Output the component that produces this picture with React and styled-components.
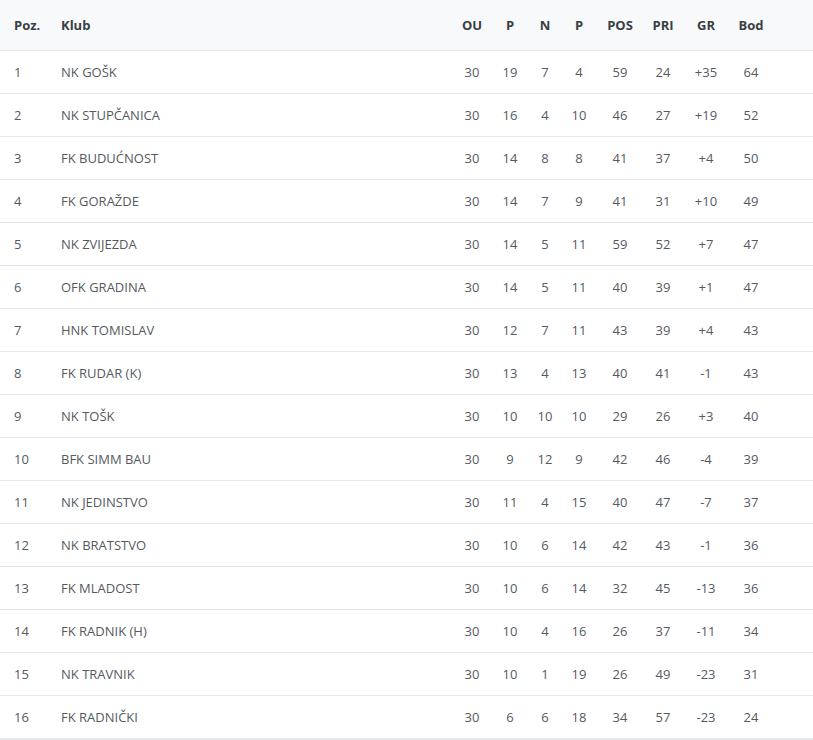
import React from "react";
import styled, { createGlobalStyle } from "styled-components";

const Global = createGlobalStyle`
  html, body { margin: 0; padding: 0; background: #fff; }
  body { font-family: "Open Sans", "Liberation Sans", sans-serif; }
`;

const cols = "47px 405px 40px 36px 34px 34px 48px 38px 48px 42px 1fr";

const Table = styled.div`
  width: 813px;
  border-bottom: 2px solid #e6e8ea;
`;

const Row = styled.div`
  display: grid;
  grid-template-columns: ${cols};
  height: ${(p) => (p.$head ? "50px" : "42px")};
  align-items: center;
  background: ${(p) => (p.$head ? "#f8f9fa" : "#fff")};
  border-bottom: ${(p) => (p.$last ? "none" : "1px solid #e6e8ea")};
  color: ${(p) => (p.$head ? "#3a3f44" : "#555a5f")};
  font-weight: ${(p) => (p.$head ? 700 : 400)};
  font-size: 13px;
`;

const Cell = styled.div`
  text-align: ${(p) => (p.$left ? "left" : "center")};
  padding-left: ${(p) => (p.$left ? "14px" : "0")};
  white-space: nowrap;
`;

const data = [
  [1, "NK GOŠK", 30, 19, 7, 4, 59, 24, "+35", 64],
  [2, "NK STUPČANICA", 30, 16, 4, 10, 46, 27, "+19", 52],
  [3, "FK BUDUĆNOST", 30, 14, 8, 8, 41, 37, "+4", 50],
  [4, "FK GORAŽDE", 30, 14, 7, 9, 41, 31, "+10", 49],
  [5, "NK ZVIJEZDA", 30, 14, 5, 11, 59, 52, "+7", 47],
  [6, "OFK GRADINA", 30, 14, 5, 11, 40, 39, "+1", 47],
  [7, "HNK TOMISLAV", 30, 12, 7, 11, 43, 39, "+4", 43],
  [8, "FK RUDAR (K)", 30, 13, 4, 13, 40, 41, "-1", 43],
  [9, "NK TOŠK", 30, 10, 10, 10, 29, 26, "+3", 40],
  [10, "BFK SIMM BAU", 30, 9, 12, 9, 42, 46, "-4", 39],
  [11, "NK JEDINSTVO", 30, 11, 4, 15, 40, 47, "-7", 37],
  [12, "NK BRATSTVO", 30, 10, 6, 14, 42, 43, "-1", 36],
  [13, "FK MLADOST", 30, 10, 6, 14, 32, 45, "-13", 36],
  [14, "FK RADNIK (H)", 30, 10, 4, 16, 26, 37, "-11", 34],
  [15, "NK TRAVNIK", 30, 10, 1, 19, 26, 49, "-23", 31],
  [16, "FK RADNIČKI", 30, 6, 6, 18, 34, 57, "-23", 24],
];

const heads = ["Poz.", "Klub", "OU", "P", "N", "P", "POS", "PRI", "GR", "Bod"];

export default function App() {
  return (
    <>
      <Global />
      <Table>
        <Row $head>
          {heads.map((h, i) => (
            <Cell key={i} $left={i < 2}>{h}</Cell>
          ))}
          <Cell />
        </Row>
        {data.map((r, ri) => (
          <Row key={ri} $last={ri === data.length - 1}>
            {r.map((v, i) => (
              <Cell key={i} $left={i < 2}>{v}</Cell>
            ))}
            <Cell />
          </Row>
        ))}
      </Table>
    </>
  );
}
